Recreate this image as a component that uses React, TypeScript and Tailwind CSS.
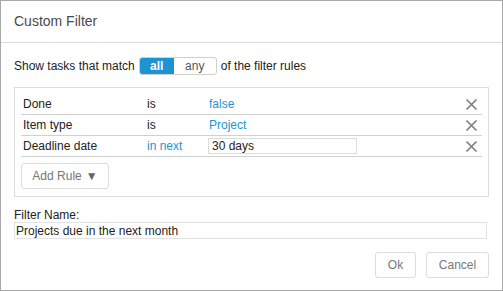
import { ReactNode } from 'react';

const rules = [
  { field: 'Done', op: 'is', opLink: false, value: 'false', input: false },
  { field: 'Item type', op: 'is', opLink: false, value: 'Project', input: false },
  { field: 'Deadline date', op: 'in next', opLink: true, value: '30 days', input: true },
];

function RemoveIcon() {
  return (
    <svg width="13" height="13" viewBox="0 0 13 13" aria-hidden="true">
      <path d="M1.5 1.5 L11.5 11.5 M11.5 1.5 L1.5 11.5" stroke="#7d7d7d" strokeWidth="1.6" fill="none" />
    </svg>
  );
}

function Button({ children, className = '' }: { children: ReactNode; className?: string }) {
  return (
    <button
      type="button"
      className={`h-[26px] rounded-[3px] border border-[#dcdcdc] bg-white text-[12px] text-[#777] flex items-center justify-center ${className}`}
    >
      {children}
    </button>
  );
}

export default function App() {
  return (
    <div
      className="w-[503px] h-[291px] border border-[#a8a8a8] bg-white flex flex-col text-[12px] text-[#222]"
      style={{ fontFamily: '"Liberation Sans", Arial, sans-serif' }}
    >
      {/* Header */}
      <div className="h-[42px] shrink-0 border-b border-[#dadada] px-[13px] flex items-center text-[14px] text-[#4a4a4a]">
        Custom Filter
      </div>

      <div className="flex flex-col px-[13px]">
        {/* Match mode */}
        <div className="mt-[14px] h-[18px] flex items-center gap-[4px]">
          <span>Show tasks that match</span>
          <div className="flex h-[18px] rounded-[3px] border border-[#d0d0d0] overflow-hidden">
            <span className="w-[34px] bg-[#1e93d2] text-white font-bold flex items-center justify-center">all</span>
            <span className="w-[42px] text-[#555] flex items-center justify-center">any</span>
          </div>
          <span>of the filter rules</span>
        </div>

        {/* Rules */}
        <div className="mt-[12px] border border-[#dcdcdc] px-[6px] pt-[6px] pb-[7px]">
          {rules.map((r) => (
            <div key={r.field} className="h-[21px] border-b border-[#d0d0d0] flex items-center pl-[2px]">
              <span className="w-[124px]">{r.field}</span>
              <span className={`w-[61px] ${r.opLink ? 'text-[#2196d3]' : ''}`}>{r.op}</span>
              {r.input ? (
                <div className="w-[149px] h-[16px] border border-[#dcdcdc] flex items-center pl-[3px]">{r.value}</div>
              ) : (
                <span className="w-[149px] pl-[1px] text-[#2196d3]">{r.value}</span>
              )}
              <span className="ml-auto mr-[4px] flex items-center">
                <RemoveIcon />
              </span>
            </div>
          ))}
          <Button className="mt-[6px] w-[88px] gap-[4px]">
            Add Rule <span className="text-[12px] text-[#666]">▼</span>
          </Button>
        </div>

        {/* Filter name */}
        <div className="mt-[11px] leading-[14px]">Filter Name:</div>
        <div className="w-[473px] h-[17px] border border-[#e2e2e2] flex items-center pl-[1px]">
          Projects due in the next month
        </div>

        {/* Footer */}
        <div className="mt-[13px] flex justify-end gap-[10px]">
          <Button className="w-[41px]">Ok</Button>
          <Button className="w-[63px]">Cancel</Button>
        </div>
      </div>
    </div>
  );
}
